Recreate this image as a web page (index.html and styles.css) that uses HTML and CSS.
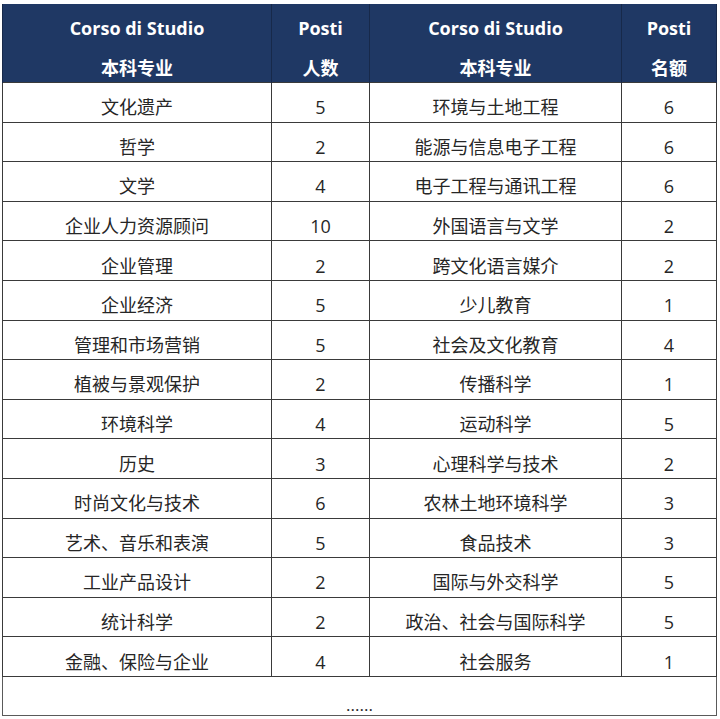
FILE: index.html
```html
<!DOCTYPE html>
<html lang="zh-CN">
<head>
<meta charset="utf-8">
<title>Corso di Studio</title>
<link rel="stylesheet" href="styles.css">
</head>
<body>
<table class="quota">
  <colgroup>
    <col class="c-name1"><col class="c-num1"><col class="c-name2"><col class="c-num2">
  </colgroup>
  <thead>
    <tr class="head">
      <th><span class="l1">Corso di Studio</span><span class="l2">本科专业</span></th>
      <th><span class="l1">Posti</span><span class="l2">人数</span></th>
      <th><span class="l1">Corso di Studio</span><span class="l2">本科专业</span></th>
      <th><span class="l1">Posti</span><span class="l2">名额</span></th>
    </tr>
  </thead>
  <tbody>
    <tr><td>文化遗产</td><td>5</td><td>环境与土地工程</td><td>6</td></tr>
    <tr><td>哲学</td><td>2</td><td>能源与信息电子工程</td><td>6</td></tr>
    <tr><td>文学</td><td>4</td><td>电子工程与通讯工程</td><td>6</td></tr>
    <tr><td>企业人力资源顾问</td><td>10</td><td>外国语言与文学</td><td>2</td></tr>
    <tr><td>企业管理</td><td>2</td><td>跨文化语言媒介</td><td>2</td></tr>
    <tr><td>企业经济</td><td>5</td><td>少儿教育</td><td>1</td></tr>
    <tr><td>管理和市场营销</td><td>5</td><td>社会及文化教育</td><td>4</td></tr>
    <tr><td>植被与景观保护</td><td>2</td><td>传播科学</td><td>1</td></tr>
    <tr><td>环境科学</td><td>4</td><td>运动科学</td><td>5</td></tr>
    <tr><td>历史</td><td>3</td><td>心理科学与技术</td><td>2</td></tr>
    <tr><td>时尚文化与技术</td><td>6</td><td>农林土地环境科学</td><td>3</td></tr>
    <tr><td>艺术、音乐和表演</td><td>5</td><td>食品技术</td><td>3</td></tr>
    <tr><td>工业产品设计</td><td>2</td><td>国际与外交科学</td><td>5</td></tr>
    <tr><td>统计科学</td><td>2</td><td>政治、社会与国际科学</td><td>5</td></tr>
    <tr><td>金融、保险与企业</td><td>4</td><td>社会服务</td><td>1</td></tr>
    <tr class="more"><td colspan="4">......</td></tr>
  </tbody>
</table>
</body>
</html>
```

FILE: styles.css
```css
html, body {
  margin: 0;
  padding: 0;
  background: #ffffff;
}

body {
  padding: 4px 0 0 2px;
  font-family: "Open Sans", "Noto Sans CJK SC", sans-serif;
  color: #262626;
}

.quota {
  border-collapse: collapse;
  table-layout: fixed;
  width: 714px;
}

.c-name1 { width: 269px; }
.c-num1 { width: 98px; }
.c-name2 { width: 252px; }
.c-num2 { width: 95px; }

.head th {
  background: #1f3864;
  color: #ffffff;
  font-weight: 700;
  font-size: 18px;
  padding: 0;
  height: 78px;
  border-left: 1px solid #17294a;
  border-right: 1px solid #17294a;
  vertical-align: top;
}

.head th .l1,
.head th .l2 {
  display: block;
  height: 29px;
  padding-top: 10px;
  line-height: 29px;
}

.head th .l2 {
  font-family: "Noto Sans CJK SC", sans-serif;
}

tbody tr {
  height: 39.6px;
}

tbody td {
  padding: 10px 0 0;
  text-align: center;
  vertical-align: middle;
  font-size: 18px;
  line-height: 20px;
  border: 1px solid #3a3a3a;
}

.more {
  height: 39px;
}

.more td {
  vertical-align: bottom;
  padding: 0 0 3px;
  font-size: 17px;
  line-height: 14px;
  border-color: #5a5a5a;
}
```
